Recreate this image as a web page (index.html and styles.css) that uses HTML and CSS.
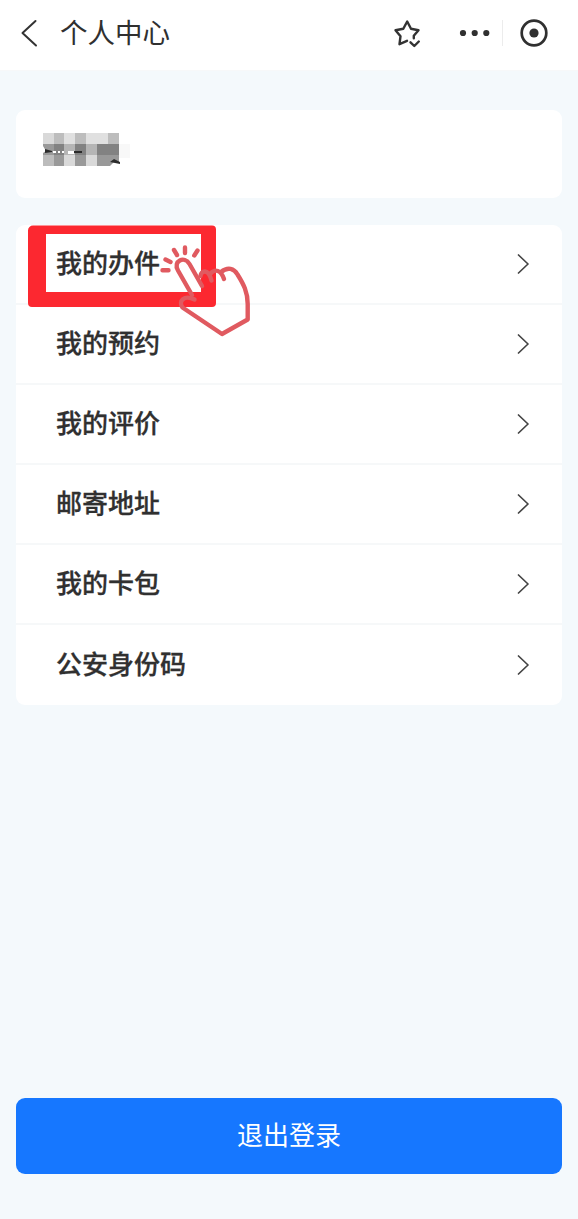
FILE: index.html
```html
<!DOCTYPE html>
<html lang="zh-CN">
<head>
<meta charset="utf-8">
<title>个人中心</title>
<link rel="stylesheet" href="styles.css">
</head>
<body>
<div class="page">
  <header class="topbar">
    <svg class="back" width="18" height="28" viewBox="0 0 18 28"><path d="M15.500 2 2.500 14l13.500 12.500"/></svg>
    <h1 class="title">个人中心</h1>
    <svg class="star" width="30" height="30" viewBox="0 0 30 30"><path d="M15 22.800 7.500 26.200 8.500 18.200 3.500 12.200 11.300 10.700 15.200 3.500 19 10.700 26.500 12.200 21.800 17.800V20.300M18.500 24.300 22.300 28 26.800 23.500"/></svg>
    <svg class="dots" width="32" height="8" viewBox="0 0 32 8"><circle cx="4" cy="4" r="3.100"/><circle cx="15.700" cy="4" r="3.100"/><circle cx="27.300" cy="4" r="3.100"/></svg>
    <span class="split"></span>
    <svg class="target" width="30" height="30" viewBox="0 0 30 30"><circle class="ring" cx="15" cy="15" r="12.300"/><circle cx="15" cy="15" r="4.600"/></svg>
  </header>
  <main class="content">
    <section class="profile">
      <svg class="mosaic" width="88" height="36" viewBox="0 0 88 36">
        <path fill="#d9d9d9" d="M0 0h11v11H0z"/><path fill="#bdbdbd" d="M11 0h10v11H11zM32 0h11v11H32zM65 0h11v11H65z"/><path fill="#e0e0e0" d="M21 0h11v11H21zM43 0h22v11H43z"/>
        <path fill="#999" d="M0 11h11v11H0z"/><path fill="#828282" d="M11 11h10v11H11zM32 11h11v11H32zM54 11h22v11H54z"/><path fill="#b5b5b5" d="M21 11h11v11H21zM43 11h11v11H43z"/>
        <path fill="#bcbcbc" d="M0 22h11v11H0z"/><path fill="#999" d="M11 22h10v11H11zM32 22h11v11H32zM54 22h22v11H54z"/><path fill="#d9d9d9" d="M21 22h11v11H21zM43 22h11v11H43z"/><path fill="#f8f8f8" d="M76 11h11v14H76z"/>
        <path fill="#fff" d="M0 13l3 5-3 2zM10 18h3v2h-3zM15 18h2v2h-2zM19 18h2v2h-2zM25 18h6v3h-6zM67 33l4-4h5v4z"/><path fill="#2b2b2b" d="M2 20V16l7 2v1zM31 18h8v2h-8zM67 29l4-3 6 3v2l-5-1z"/>
      </svg>
    </section>
    <nav class="menu">
      <a class="row"><span>我的办件</span><svg class="arrow" width="14" height="20" viewBox="0 0 14 20"><path d="M2.500 1 12 10 2.500 19"/></svg></a>
      <a class="row"><span>我的预约</span><svg class="arrow" width="14" height="20" viewBox="0 0 14 20"><path d="M2.500 1 12 10 2.500 19"/></svg></a>
      <a class="row"><span>我的评价</span><svg class="arrow" width="14" height="20" viewBox="0 0 14 20"><path d="M2.500 1 12 10 2.500 19"/></svg></a>
      <a class="row"><span>邮寄地址</span><svg class="arrow" width="14" height="20" viewBox="0 0 14 20"><path d="M2.500 1 12 10 2.500 19"/></svg></a>
      <a class="row"><span>我的卡包</span><svg class="arrow" width="14" height="20" viewBox="0 0 14 20"><path d="M2.500 1 12 10 2.500 19"/></svg></a>
      <a class="row"><span>公安身份码</span><svg class="arrow" width="14" height="20" viewBox="0 0 14 20"><path d="M2.500 1 12 10 2.500 19"/></svg></a>
      <svg class="callout" width="240" height="120" viewBox="20 220 240 120">
        <path class="frame" fill-rule="evenodd" d="M33 225.500H212a4 4 0 0 1 4 4V303a4 4 0 0 1-4 4H32a4 4 0 0 1-4-4V230.500a5 5 0 0 1 5-5zM46 234V292H201V234z"/>
        <g class="hand">
          <path d="M192 295 178 270.500C172.500 261 184.500 255.500 189.500 264L202 286"/>
          <path d="M200.500 276C201 270.500 208.500 268 211.500 280.500"/>
          <path d="M210.500 273.500C215 268.500 221 270 224 279"/>
          <path d="M221 272C228 266.500 234 268.500 237.500 274.500C243.500 284 247.700 292 247.700 304V319.500L222 334 182.500 307.500C178 301 184 294.500 194.500 299.500"/>
          <path d="M162.500 270.300H168.500M165.500 259.500 170.500 262M174 250 177 255M185 247.500V253M197.500 250.500 194.300 255.500"/>
        </g>
      </svg>
    </nav>
    <button class="logout">退出登录</button>
  </main>
</div>
</body>
</html>
```
FILE: styles.css
```css
* { box-sizing: border-box; }
body { margin: 0; font-family: "Noto Sans CJK SC", sans-serif; color: #303030; }
svg { display: block; flex: none; fill: none; stroke-linecap: round; stroke-linejoin: round; }
.page { display: flex; flex-direction: column; height: 1219px; background: #f4f9fc; }
.topbar { display: flex; align-items: center; height: 70px; padding: 0 29px 4px 20px; background: #fff; }
.back { stroke: #333; stroke-width: 2; }
.title { margin: 0 auto 0 22px; padding-bottom: 4px; font-size: 27.500px; line-height: 40px; font-weight: 400; }
.star { stroke: #333; stroke-width: 2.400; margin-right: 37px; }
.dots, .target { fill: #303030; }
.split { width: 1px; height: 26px; margin: 0 16px 0 11px; background: #ececec; }
.ring { fill: none; stroke: #303030; stroke-width: 2.700; }
.content { display: flex; flex-direction: column; flex: 1; padding: 39px 16px 45px; border-top: 1px solid #f7f8f9; }
.profile { height: 88px; padding: 23px 27px; border-radius: 9px; background: #fff; }
.menu { position: relative; height: 480px; margin-top: 27px; border-radius: 9px; background: #fff; display: grid; grid-template-rows: repeat(6, 1fr); }
.row { display: flex; align-items: center; justify-content: space-between; padding: 0 32px 0 40px; border-bottom: 2px solid #f6f8f9; font-size: 26px; line-height: 38px; font-weight: 500; -webkit-text-stroke: 0.300px #303030; }
.row:nth-of-type(6) { border-bottom: 0; }
.row span { padding-bottom: 4px; }
.arrow { stroke: #444; stroke-width: 1.700; }
.callout { position: absolute; left: 4px; top: -5px; }
.frame { fill: #fc2830; }
.hand { stroke: #e05a60; stroke-width: 4.400; }
.logout { height: 76px; margin-top: auto; padding: 0 0 4px; border: 0; border-radius: 9px; background: #1677ff; color: #fff; font: 400 26px/38px "Noto Sans CJK SC", sans-serif; }
```
